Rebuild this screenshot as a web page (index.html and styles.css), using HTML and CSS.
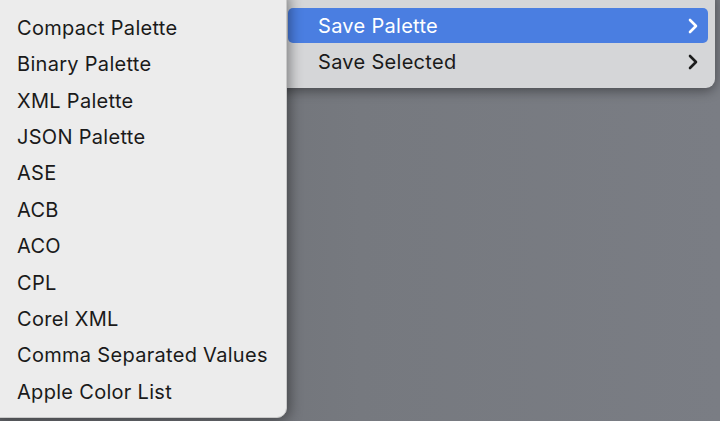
FILE: index.html
```html
<!DOCTYPE html>
<html>
<head>
<meta charset="utf-8">
<link rel="stylesheet" href="styles.css">
</head>
<body>
<div class="desk">
  <div class="menu submenu-parent">
    <div class="row active"><span>Save Palette</span><svg class="chev" viewBox="0 0 10 16"><path d="M2 2 L8 8 L2 14" /></svg></div>
    <div class="row"><span>Save Selected</span><svg class="chev" viewBox="0 0 10 16"><path d="M2 2 L8 8 L2 14" /></svg></div>
  </div>
  <div class="menu formats">
    <div class="item">Compact Palette</div>
    <div class="item">Binary Palette</div>
    <div class="item">XML Palette</div>
    <div class="item">JSON Palette</div>
    <div class="item">ASE</div>
    <div class="item">ACB</div>
    <div class="item">ACO</div>
    <div class="item">CPL</div>
    <div class="item">Corel XML</div>
    <div class="item">Comma Separated Values</div>
    <div class="item">Apple Color List</div>
  </div>
</div>
</body>
</html>
```
FILE: styles.css
```css
html, body {
  margin: 0;
  padding: 0;
}
body {
  background: #777a81;
  font-family: Inter, "Noto Sans", sans-serif;
  overflow: hidden;
}
.desk {
  position: relative;
  width: 720px;
  height: 421px;
  overflow: hidden;
  background: linear-gradient(to right, #6a6c71 0px, #76797f 360px, #7a7d84 720px);
}
.menu {
  position: absolute;
  box-sizing: border-box;
}
.formats {
  left: -10px;
  top: -10px;
  width: 296.5px;
  height: 428px;
  background: #ececec;
  border-radius: 10px;
  border: 1px solid #c9c9c9;
  padding: 18.5px 0 7px 0;
  box-shadow: 2px 2px 14px rgba(0,0,0,0.45);
  display: flex;
  flex-direction: column;
}
.item {
  height: 36.5px;
  display: flex;
  align-items: center;
  padding-left: 26px;
  font-size: 20px;
  color: #1a1a1a;
  letter-spacing: 0.3px;
  white-space: nowrap;
}
.submenu-parent {
  left: 270px;
  top: -10px;
  width: 445px;
  height: 98px;
  background: #d5d6d8;
  border-radius: 9px;
  padding: 18px 7px 0 17.5px;
  box-shadow: 0 3px 12px rgba(0,0,0,0.4);
  display: flex;
  flex-direction: column;
  gap: 1px;
}
.row {
  height: 35px;
  display: flex;
  align-items: center;
  justify-content: space-between;
  padding: 0 10px 0 30.5px;
  border-radius: 5px;
  font-size: 20px;
  color: #1a1a1a;
  letter-spacing: 0.3px;
}
.row.active {
  background: #4a7ee1;
  color: #ffffff;
}
.chev {
  width: 10px;
  height: 16px;
  fill: none;
  stroke: #1c1c1c;
  stroke-width: 2.6;
  stroke-linecap: round;
  stroke-linejoin: round;
}
.row.active .chev {
  stroke: #ffffff;
}
```
